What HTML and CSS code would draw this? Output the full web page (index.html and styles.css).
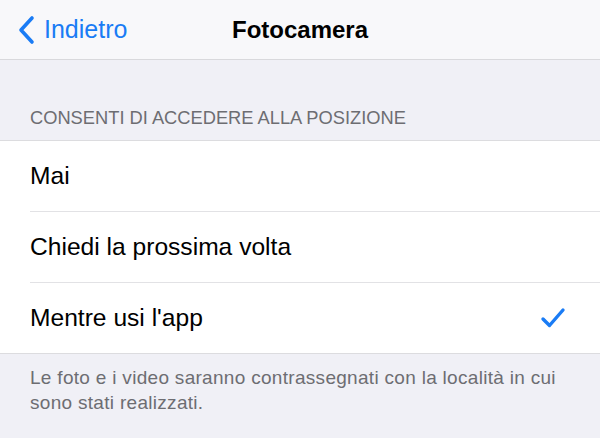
FILE: index.html
```html
<!DOCTYPE html>
<html lang="it">

<head>
    <meta charset="UTF-8">
    <meta name="viewport" content="width=device-width, initial-scale=1.0">
    <title>Fotocamera</title>
    <link rel="stylesheet" href="styles.css">
</head>

<body>
    <div class="navbar">
        <a class="back" href="#">
            <svg class="chevron" width="18" height="30" viewBox="0 0 18 30">
                <path d="M15 3 L4 15 L15 27" fill="none" stroke="#1a7cf5" stroke-width="3.6"
                    stroke-linecap="round" stroke-linejoin="round" />
            </svg>
            <span>Indietro</span>
        </a>
        <div class="title">Fotocamera</div>
    </div>

    <div class="section-header">CONSENTI DI ACCEDERE ALLA POSIZIONE</div>

    <div class="list">
        <div class="row">
            <div class="label">Mai</div>
        </div>
        <div class="row">
            <div class="label">Chiedi la prossima volta</div>
        </div>
        <div class="row">
            <div class="label">Mentre usi l'app</div>
            <svg class="check" width="26" height="22" viewBox="0 0 26 22">
                <path d="M3 12 L9.5 18.5 L23 3" fill="none" stroke="#1a7cf5" stroke-width="3.4"
                    stroke-linecap="round" stroke-linejoin="round" />
            </svg>
        </div>
    </div>

    <div class="footer">
        Le foto e i video saranno contrassegnati con la località in cui sono stati realizzati.
    </div>
</body>

</html>
```

FILE: styles.css
```css
* {
    margin: 0;
    padding: 0;
    box-sizing: border-box;
}

body {
    background-color: #f0f0f6;
    font-family: "Liberation Sans", Arial, sans-serif;
    width: 600px;
    height: 438px;
    overflow: hidden;
}

.navbar {
    height: 60px;
    background-color: #f8f8fa;
    border-bottom: 1px solid #d9d9dc;
    display: flex;
    align-items: center;
    position: relative;
}

.back {
    display: flex;
    align-items: center;
    gap: 9px;
    padding-left: 17px;
    color: #1a7cf5;
    text-decoration: none;
    font-size: 25px;
}

.chevron {
    display: block;
}

.title {
    position: absolute;
    left: 0;
    right: 0;
    text-align: center;
    font-size: 24px;
    font-weight: bold;
    color: #000;
    pointer-events: none;
}

.section-header {
    height: 80px;
    padding: 0 30px 11px;
    display: flex;
    align-items: flex-end;
    font-size: 18.3px;
    color: #6d6d72;
}

.list {
    background-color: #fff;
    border-top: 1px solid #dcdcdf;
    border-bottom: 1px solid #dcdcdf;
}

.row {
    height: 71px;
    margin-left: 30px;
    padding-right: 34px;
    display: flex;
    align-items: center;
    justify-content: space-between;
    border-bottom: 1px solid #e2e2e5;
}

.row:last-child {
    height: 70px;
    border-bottom: none;
}

.label {
    font-size: 24.6px;
    color: #000;
}

.footer {
    padding: 11px 30px 0;
    font-size: 19px;
    letter-spacing: 0.3px;
    line-height: 25px;
    color: #6d6d72;
    width: 600px;
}
```
